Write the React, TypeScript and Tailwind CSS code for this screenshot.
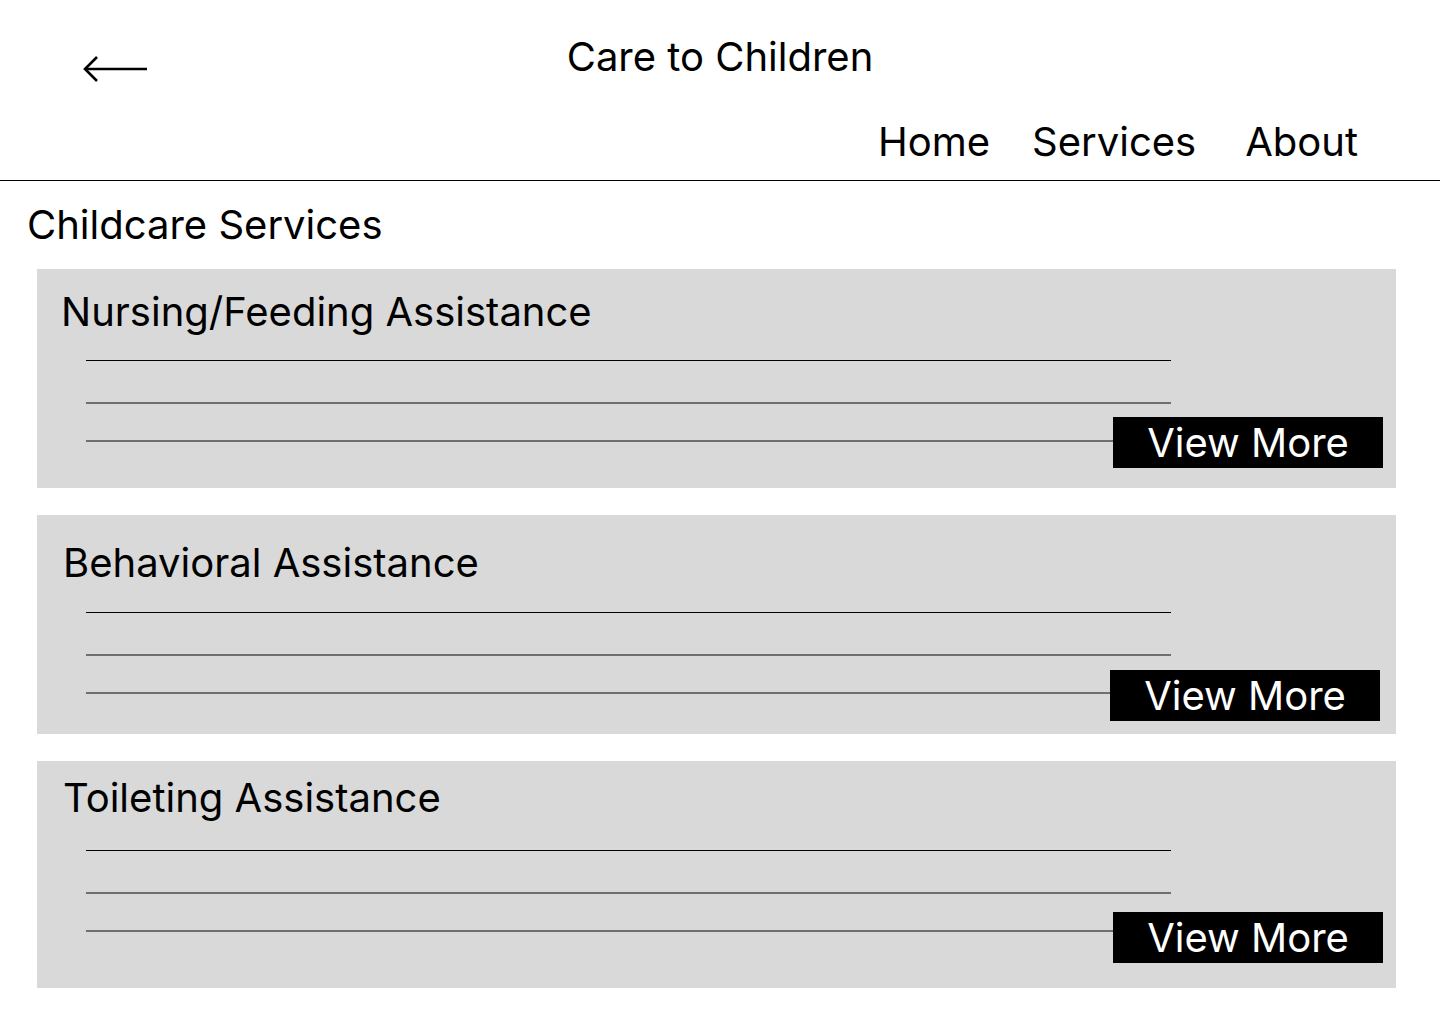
import React from "react";

type Card = {
  title: string;
  height: string;
  pt: string;
  pl: string;
  linesMt: string;
  btnTop: string;
  btnLeft: string;
};

const cards: Card[] = [
  {
    title: "Nursing/Feeding Assistance",
    height: "h-[219px]",
    pt: "pt-[23px]",
    pl: "pl-[24px]",
    linesMt: "mt-[28px]",
    btnTop: "top-[148px]",
    btnLeft: "left-[1076px]",
  },
  {
    title: "Behavioral Assistance",
    height: "h-[219px]",
    pt: "pt-[28px]",
    pl: "pl-[26px]",
    linesMt: "mt-[29px]",
    btnTop: "top-[155px]",
    btnLeft: "left-[1073px]",
  },
  {
    title: "Toileting Assistance",
    height: "h-[227px]",
    pt: "pt-[17px]",
    pl: "pl-[26px]",
    linesMt: "mt-[32px]",
    btnTop: "top-[151px]",
    btnLeft: "left-[1076px]",
  },
];

function ServiceCard({ c }: { c: Card }) {
  return (
    <div className={`relative bg-[#d9d9d9] ${c.height} ${c.pt}`}>
      <h3 className={`text-[40px] leading-[40px] font-normal ${c.pl}`}>{c.title}</h3>
      <div className={`ml-[49px] w-[1085px] flex flex-col ${c.linesMt}`}>
        <div className="h-px bg-black" />
        <div className="h-[2px] mt-[41px] bg-[#6f6f6f]" />
        <div className="h-[2px] mt-[36px] bg-[#6f6f6f]" />
      </div>
      <button
        className={`absolute ${c.btnTop} ${c.btnLeft} w-[270px] h-[51px] bg-black text-white text-[40px] leading-none flex items-center justify-center`}
      >
        View More
      </button>
    </div>
  );
}

export default function App() {
  return (
    <div className="w-[1440px] h-[1024px] bg-white text-black font-['Inter',_'Noto_Sans',_sans-serif] overflow-hidden">
      <header className="h-[181px] border-b border-black">
        <div className="grid grid-cols-[1fr_auto_1fr] items-start pt-[37px] h-[77px]">
          <div>
            <svg
              className="ml-[82px] mt-[18px]"
              width="68"
              height="28"
              viewBox="0 0 68 28"
              fill="none"
              stroke="black"
              strokeWidth="2.6"
              strokeLinecap="butt"
              strokeLinejoin="miter"
            >
              <path d="M3 14 H65" />
              <path d="M15 2 L3 14 L15 26" />
            </svg>
          </div>
          <h1 className="text-[40px] leading-[40px] font-normal">Care to Children</h1>
          <div />
        </div>
        <nav className="flex justify-end mt-[45px] pr-[82px] text-[40px] leading-[40px]">
          <a>Home</a>
          <a className="ml-[42px]">Services</a>
          <a className="ml-[49px]">About</a>
        </nav>
      </header>
      <main>
        <h2 className="ml-[27px] mt-[24px] text-[40px] leading-[40px] font-normal">Childcare Services</h2>
        <div className="ml-[37px] w-[1359px] mt-[24px] flex flex-col gap-[27px]">
          {cards.map((c) => (
            <ServiceCard key={c.title} c={c} />
          ))}
        </div>
      </main>
    </div>
  );
}
